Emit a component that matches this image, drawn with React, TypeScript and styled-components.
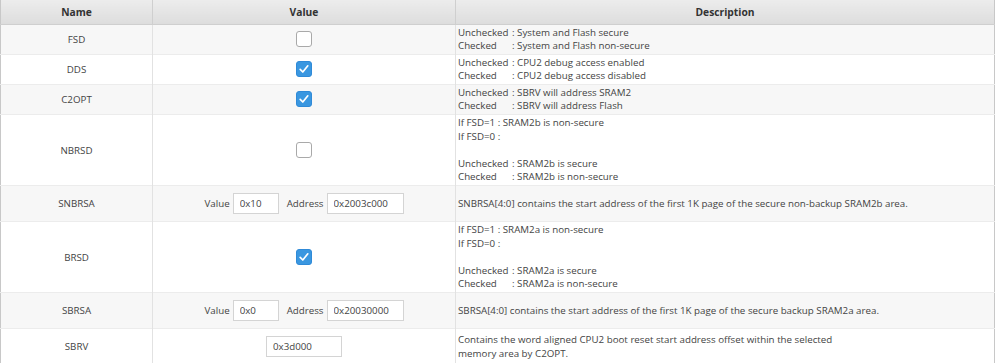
import React from "react";
import styled, {createGlobalStyle} from "styled-components";

const GlobalStyle = createGlobalStyle`
  html, body {
    margin: 0;
    padding: 0;
    background: #ffffff;
  }
  body {
    font-family: "Open Sans", "Noto Sans", Arial, sans-serif;
    font-size: 9.75px;
    color: #333;
  }
`;

type Line = { label?: string, text: string };

interface OptionRow {
  name: string
  kind: 'check' | 'pair' | 'single'
  checked?: boolean
  value?: string
  address?: string
  lines: Line[]
}

const rows: OptionRow[] = [
  {
    name: 'FSD', kind: 'check', checked: false, lines: [
      {label: 'Unchecked', text: 'System and Flash secure'},
      {label: 'Checked', text: 'System and Flash non-secure'},
    ]
  },
  {
    name: 'DDS', kind: 'check', checked: true, lines: [
      {label: 'Unchecked', text: 'CPU2 debug access enabled'},
      {label: 'Checked', text: 'CPU2 debug access disabled'},
    ]
  },
  {
    name: 'C2OPT', kind: 'check', checked: true, lines: [
      {label: 'Unchecked', text: 'SBRV will address SRAM2'},
      {label: 'Checked', text: 'SBRV will address Flash'},
    ]
  },
  {
    name: 'NBRSD', kind: 'check', checked: false, lines: [
      {text: 'If FSD=1 : SRAM2b is non-secure'},
      {text: 'If FSD=0 :'},
      {text: ''},
      {label: 'Unchecked', text: 'SRAM2b is secure'},
      {label: 'Checked', text: 'SRAM2b is non-secure'},
    ]
  },
  {
    name: 'SNBRSA', kind: 'pair', value: '0x10', address: '0x2003c000', lines: [
      {text: 'SNBRSA[4:0] contains the start address of the first 1K page of the secure non-backup SRAM2b area.'},
    ]
  },
  {
    name: 'BRSD', kind: 'check', checked: true, lines: [
      {text: 'If FSD=1 : SRAM2a is non-secure'},
      {text: 'If FSD=0 :'},
      {text: ''},
      {label: 'Unchecked', text: 'SRAM2a is secure'},
      {label: 'Checked', text: 'SRAM2a is non-secure'},
    ]
  },
  {
    name: 'SBRSA', kind: 'pair', value: '0x0', address: '0x20030000', lines: [
      {text: 'SBRSA[4:0] contains the start address of the first 1K page of the secure backup SRAM2a area.'},
    ]
  },
  {
    name: 'SBRV', kind: 'single', value: '0x3d000', lines: [
      {text: 'Contains the word aligned CPU2 boot reset start address offset within the selected'},
      {text: 'memory area by C2OPT.'},
    ]
  },
];

const CheckBox: React.FC<{ checked: boolean }> = ({checked}) => (
  <Box $checked={checked}>
    {checked &&
      <svg width="12" height="12" viewBox="0 0 12 12">
        <path d="M2.2 6.4 L4.8 9 L9.8 2.8" fill="none" stroke="#fff" strokeWidth="1.7" strokeLinecap="round"
              strokeLinejoin="round"/>
      </svg>
    }
  </Box>
);

const ValueCell: React.FC<{ row: OptionRow }> = ({row}) => {
  if (row.kind === 'check') {
    return <CheckBox checked={!!row.checked}/>;
  }
  if (row.kind === 'pair') {
    return <Fields>
      <FieldLabel>Value</FieldLabel>
      <TextBox $width={46} defaultValue={row.value}/>
      <FieldLabel $gap={5}>Address</FieldLabel>
      <TextBox $width={77} defaultValue={row.address}/>
    </Fields>;
  }
  return <Fields>
    <TextBox $width={76} defaultValue={row.value}/>
  </Fields>;
};

export default function App() {
  return <Page>
    <GlobalStyle/>
    <Table>
      <colgroup>
        <col style={{width: 152}}/>
        <col style={{width: 303}}/>
        <col/>
      </colgroup>
      <thead>
      <tr>
        <HeadCell>Name</HeadCell>
        <HeadCell>Value</HeadCell>
        <HeadCell>Description</HeadCell>
      </tr>
      </thead>
      <tbody>
      {rows.map((row, index) => (
        <Row key={row.name} $alt={index % 2 === 0}>
          <NameCell>{row.name}</NameCell>
          <ValueTd $input={row.kind !== 'check'}><ValueCell row={row}/></ValueTd>
          <DescCell>
            {row.lines.map((line, i) => (
              <DescLine key={i}>
                {line.label !== undefined
                  ? <><LineLabel>{line.label}</LineLabel>: {line.text}</>
                  : line.text}
              </DescLine>
            ))}
          </DescCell>
        </Row>
      ))}
      </tbody>
    </Table>
  </Page>;
}

const Page = styled.div`
  width: 998px;
  height: 363px;
  overflow: hidden;
  background: #fff;
`;

const Table = styled.table`
  width: 995px;
  border-collapse: collapse;
  table-layout: fixed;
  border-left: 1px solid #c8c8c8;
  border-right: 1px solid #c8c8c8;
  border-bottom: 1px solid #c8c8c8;
`;

const HeadCell = styled.th`
  height: 24px;
  padding: 0;
  box-sizing: border-box;
  background: linear-gradient(#ececec, #dddddd);
  border-left: 1px solid #cfcfcf;
  border-bottom: 1px solid #cfcfcf;
  font-weight: 700;
  font-size: 10.25px;
  color: #333;
  text-align: center;
  vertical-align: middle;

  &:first-child {
    border-left: none;
  }
`;

const Row = styled.tr<{ $alt: boolean }>`
  background: ${p => p.$alt ? '#f7f7f7' : '#ffffff'};

  & > td {
    border-top: 1px solid #ececec;
  }
`;

const NameCell = styled.td`
  text-align: center;
  vertical-align: middle;
  padding: 0;
  color: #444;
`;

const ValueTd = styled.td<{ $input: boolean }>`
  text-align: center;
  vertical-align: middle;
  padding: ${p => p.$input ? '7px 0' : '0'};
  border-left: 1px solid #e2e2e2;
`;

const DescCell = styled.td`
  padding: 1px 2px;
  vertical-align: middle;
  border-left: 1px solid #e2e2e2;
  color: #444;
`;

const DescLine = styled.div`
  height: 13.6px;
  line-height: 13.6px;
  white-space: nowrap;
`;

const LineLabel = styled.span`
  display: inline-block;
  width: 54px;
`;

const Box = styled.span<{ $checked: boolean }>`
  display: inline-flex;
  align-items: center;
  justify-content: center;
  width: 16px;
  height: 16px;
  box-sizing: border-box;
  border-radius: 3px;
  vertical-align: middle;
  border: 1px solid ${p => p.$checked ? '#2f8ad8' : '#a9a9a9'};
  background: ${p => p.$checked ? '#3a97e0' : '#ffffff'};
`;

const Fields = styled.div`
  display: flex;
  align-items: center;
  justify-content: center;
  gap: 3px;
`;

const FieldLabel = styled.span<{ $gap?: number }>`
  color: #444;
  margin-left: ${p => p.$gap ?? 0}px;
`;

const TextBox = styled.input<{ $width: number }>`
  width: ${p => p.$width}px;
  height: 21px;
  box-sizing: border-box;
  border: 1px solid #d4d4d4;
  background: #fff;
  padding: 0 6px;
  font-family: inherit;
  font-size: 9.75px;
  color: #444;
  outline: none;
`;
